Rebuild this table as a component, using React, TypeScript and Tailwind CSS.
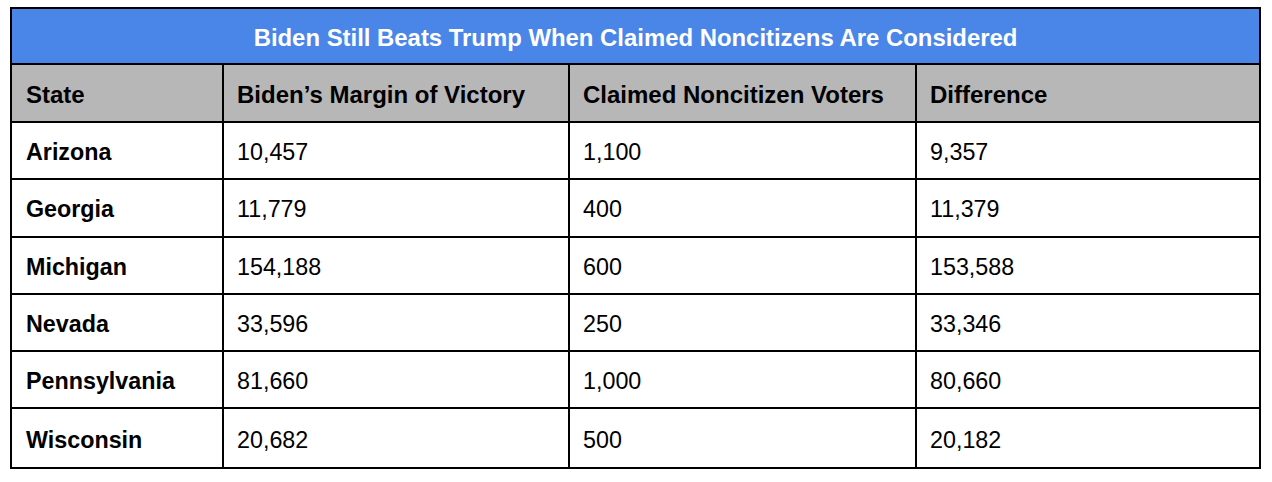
import React from "react";

const rows = [
  { state: "Arizona", margin: "10,457", claimed: "1,100", diff: "9,357" },
  { state: "Georgia", margin: "11,779", claimed: "400", diff: "11,379" },
  { state: "Michigan", margin: "154,188", claimed: "600", diff: "153,588" },
  { state: "Nevada", margin: "33,596", claimed: "250", diff: "33,346" },
  { state: "Pennsylvania", margin: "81,660", claimed: "1,000", diff: "80,660" },
  { state: "Wisconsin", margin: "20,682", claimed: "500", diff: "20,182" },
];

const App = () => {
  return (
    <div
      className="w-[1272px] h-[482px] bg-white pt-[7px] pl-[10px]"
      style={{ fontFamily: '"Liberation Sans", Arial, sans-serif' }}
    >
      <div className="w-[1251px] border-2 border-black text-black">
        <div className="h-[56px] bg-[#4a86e8] border-b-2 border-black flex items-center justify-center pt-[3px] text-white font-bold text-[23.9px]">
          Biden Still Beats Trump When Claimed Noncitizens Are Considered
        </div>

        <div className="h-[58px] bg-[#b7b7b7] border-b-2 border-black flex font-bold text-[24px]">
          <div className="w-[212px] border-r-2 border-black flex items-center pl-[14px] pt-[3px]">
            State
          </div>
          <div className="w-[346px] border-r-2 border-black flex items-center pl-[13px] pt-[3px]">
            Biden’s Margin of Victory
          </div>
          <div className="w-[347px] border-r-2 border-black flex items-center pl-[13px] pt-[3px]">
            Claimed Noncitizen Voters
          </div>
          <div className="flex-1 flex items-center pl-[13px] pt-[3px]">
            Difference
          </div>
        </div>

        {rows.map((row, i) => (
          <div
            key={row.state}
            className={
              "h-[57.3px] flex text-[23.3px] " +
              (i < rows.length - 1 ? "border-b-2 border-black" : "")
            }
          >
            <div className="w-[212px] border-r-2 border-black flex items-center pl-[14px] pt-[4px] font-bold">
              {row.state}
            </div>
            <div className="w-[346px] border-r-2 border-black flex items-center pl-[13px] pt-[4px]">
              {row.margin}
            </div>
            <div className="w-[347px] border-r-2 border-black flex items-center pl-[13px] pt-[4px]">
              {row.claimed}
            </div>
            <div className="flex-1 flex items-center pl-[13px] pt-[4px]">
              {row.diff}
            </div>
          </div>
        ))}
      </div>
    </div>
  );
};

export default App;
